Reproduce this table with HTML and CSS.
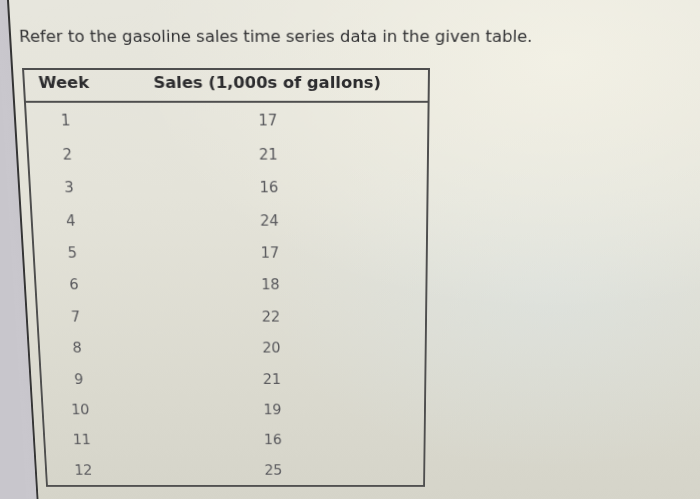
FILE: index.html
```html
<!DOCTYPE html>
<html lang="en">
<head>
<meta charset="utf-8">
<title>Gasoline sales</title>
<link rel="stylesheet" href="styles.css">
</head>
<body>
<div class="sheet">
  <div class="content">
    <p class="prompt">Refer to the gasoline sales time series data in the given table.</p>
    <div class="data">
      <div class="th">Week</div>
      <div class="th col2">Sales (1,000s of gallons)</div>
      <div class="td">1</div><div class="td col2">17</div>
      <div class="td">2</div><div class="td col2">21</div>
      <div class="td">3</div><div class="td col2">16</div>
      <div class="td">4</div><div class="td col2">24</div>
      <div class="td">5</div><div class="td col2">17</div>
      <div class="td">6</div><div class="td col2">18</div>
      <div class="td">7</div><div class="td col2">22</div>
      <div class="td">8</div><div class="td col2">20</div>
      <div class="td">9</div><div class="td col2">21</div>
      <div class="td">10</div><div class="td col2">19</div>
      <div class="td">11</div><div class="td col2">16</div>
      <div class="td">12</div><div class="td col2">25</div>
    </div>
  </div>
</div>
</body>
</html>
```
FILE: styles.css
```css
html, body {
  margin: 0;
  padding: 0;
}
body {
  width: 700px;
  height: 499px;
  overflow: hidden;
  background: #c8c6cc;
  font-family: "DejaVu Sans", Verdana, sans-serif;
}
.sheet {
  width: 740px;
  height: 540px;
  transform-origin: 0 0;
  transform: matrix3d(1.011723, 0, 0, 0, 0.062018, 1.023446, 0, 0.000172398, 0, 0, 1, 0, -4.2172, -0.79717, 0, 1);
  background:
    linear-gradient(to right, #c9c7cd 0, #c8c6cc 11px, #343434 11px, #343434 13px, transparent 13px),
    radial-gradient(ellipse 420px 260px at 560px 60px, rgba(246, 244, 232, 0.75), rgba(246, 244, 232, 0) 100%),
    radial-gradient(ellipse 300px 200px at 560px 300px, rgba(220, 232, 236, 0.35), rgba(220, 232, 236, 0) 100%),
    linear-gradient(to bottom, #e7e6dd 0, #e4e3d9 200px, #dad9ce 420px, #d5d4c9 540px);
}
.content {
  padding: 27px 0 0 21px;
}
.prompt {
  margin: 0;
  font-size: 16.4px;
  line-height: 20px;
  color: #333335;
}
.data {
  display: grid;
  grid-template-columns: 78px 326px;
  grid-auto-rows: 34.4px;
  width: 408px;
  box-sizing: border-box;
  margin: 21px 0 0 1px;
  border: 2px solid #4e4e4e;
}
.th {
  height: 20px;
  padding: 3px 0 8px;
  line-height: 20px;
  font-size: 16.4px;
  font-weight: bold;
  color: #2c2c2e;
  text-align: center;
  border-bottom: 2px solid #4e4e4e;
  grid-row: 1;
}
.td {
  line-height: 34.4px;
  font-size: 15px;
  color: #58585c;
  text-align: center;
}
.col2 {
  padding-left: 4px;
}
```
